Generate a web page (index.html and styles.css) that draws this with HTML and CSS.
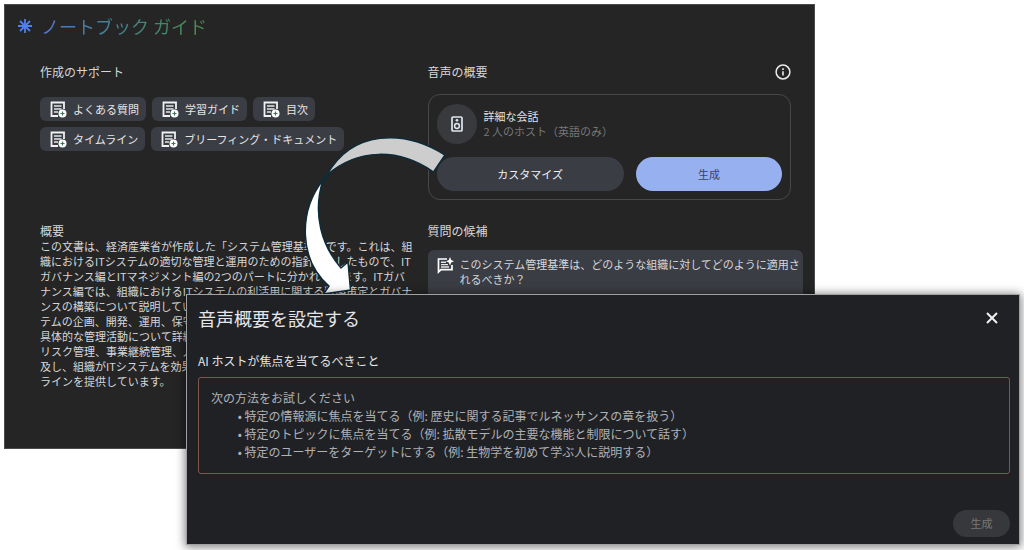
FILE: index.html
```html
<!DOCTYPE html>
<html lang="ja">
<head>
<meta charset="utf-8">
<title>ノートブック ガイド</title>
<link rel="stylesheet" href="styles.css">
</head>
<body>
<svg class="defs" aria-hidden="true">
  <symbol id="doc-add" viewBox="0 0 17 17">
    <path d="M8 15H1.500V1.500H14V8" fill="none" stroke="#f1f1f1" stroke-width="1.800"/>
    <path d="M4 5h7.500M4 8h7.500M4 11h4" stroke="#e4e5e8" stroke-width="1.500"/>
    <circle cx="12.500" cy="12.500" r="4" fill="#fff"/>
    <path d="M12.500 10.500v4M10.500 12.500h4" stroke="#43705a" stroke-width="1.200"/>
  </symbol>
</svg>

<main class="guide">
  <header class="guide-header">
    <svg class="spark" viewBox="0 0 16 16" aria-hidden="true">
      <path d="M8 1v14M1 8h14M3 3l10 10M13 3L3 13" stroke="#4f7ff0" stroke-width="1.800"/>
    </svg>
    <h1 class="guide-title">ノートブック ガイド</h1>
  </header>

  <div class="grid">
    <section>
      <h2 class="section-title">作成のサポート</h2>
      <div class="chips">
        <button class="chip"><svg class="chip-icon"><use href="#doc-add"/></svg>よくある質問</button>
        <button class="chip"><svg class="chip-icon"><use href="#doc-add"/></svg>学習ガイド</button>
        <button class="chip"><svg class="chip-icon"><use href="#doc-add"/></svg>目次</button>
        <button class="chip"><svg class="chip-icon"><use href="#doc-add"/></svg>タイムライン</button>
        <button class="chip"><svg class="chip-icon"><use href="#doc-add"/></svg>ブリーフィング・ドキュメント</button>
      </div>
    </section>

    <section class="audio">
      <div class="audio-head">
        <h2 class="section-title">音声の概要</h2>
        <button class="icon-button" aria-label="情報">
          <svg class="info-icon" viewBox="0 0 16 16" aria-hidden="true">
            <circle cx="8" cy="8" r="6.900" fill="none" stroke="#e8eaee" stroke-width="1.500"/>
            <path d="M8 7.200v4.300M8 4.300v1.700" stroke="#e8eaee" stroke-width="1.600"/>
          </svg>
        </button>
      </div>
      <div class="audio-card">
        <div class="host">
          <span class="host-badge">
            <svg class="speaker" viewBox="0 0 12 16" aria-hidden="true">
              <rect x="1" y="1" width="10" height="14" rx="1" fill="none" stroke="#dfe6ef" stroke-width="1.700"/>
              <circle cx="6" cy="4.300" r="1.300" fill="#dfe6ef"/>
              <circle cx="6" cy="10" r="2.400" fill="none" stroke="#dfe6ef" stroke-width="1.500"/>
            </svg>
          </span>
          <div class="host-text">
            <p class="host-name">詳細な会話</p>
            <p class="host-note">2 人のホスト（英語のみ）</p>
          </div>
        </div>
        <div class="actions">
          <button class="pill pill-dark">カスタマイズ</button>
          <button class="pill pill-primary">生成</button>
        </div>
      </div>
    </section>

    <section>
      <h2 class="sub-title">概要</h2>
      <p class="summary">
        <span>この文書は、経済産業省が作成した「システム管理基準」です。これは、組</span>
        <span>織におけるITシステムの適切な管理と運用のための指針を示したもので、IT</span>
        <span>ガバナンス編とITマネジメント編の2つのパートに分かれています。ITガバ</span>
        <span>ナンス編では、組織におけるITシステムの利活用に関する戦略策定とガバナ</span>
        <span>ンスの構築について説明してい</span>
        <span>テムの企画、開発、運用、保守</span>
        <span>具体的な管理活動について詳細</span>
        <span>リスク管理、事業継続管理、人</span>
        <span>及し、組織がITシステムを効果</span>
        <span>ラインを提供しています。</span>
      </p>
    </section>

    <section class="questions">
      <h2 class="sub-title">質問の候補</h2>
      <button class="question">
        <svg class="question-icon" viewBox="0 0 17 17" aria-hidden="true">
          <path d="M10 2H1.500V15L4 12.700H15V8" fill="none" stroke="#fff" stroke-width="1.700"/>
          <path d="M4 5.200h5M4 7.600h7M4 10h8" stroke="#e4e5e8" stroke-width="1.400"/>
          <path d="M13 0l1.200 3 2.800 1.200-2.800 1.200L13 8.400l-1.200-3L9 4.200 11.800 3z" fill="#fff"/>
        </svg>
        <span>このシステム管理基準は、どのような組織に対してどのように適用されるべきか？</span>
      </button>
    </section>
  </div>
</main>

<svg class="arrow" viewBox="0 0 150 165" aria-hidden="true">
  <g stroke="#0c2c3a" stroke-width="1.500" stroke-linejoin="round">
    <path d="M27 45C52 0 104-1 145 25L133.500 42C99 18 58 18 27 45Z" fill="#cdcdcd"/>
    <path d="M23 50C-2 82-1 130 29 156L23.500 164L50.500 160L48 132L41 138C22 116 12 84 23 50Z" fill="#fff"/>
    <path d="M28 44L22 53" stroke-width="3"/>
  </g>
</svg>

<div class="dialog" role="dialog" aria-labelledby="dialog-title">
  <div class="dialog-head">
    <h2 class="dialog-title" id="dialog-title">音声概要を設定する</h2>
    <button class="icon-button close" aria-label="閉じる">
      <svg class="close-icon" viewBox="0 0 12 12" aria-hidden="true">
        <path d="M1 1l10 10M11 1L1 11" stroke="#f0f0f0" stroke-width="2"/>
      </svg>
    </button>
  </div>
  <label class="field-label" for="focus">AI ホストが焦点を当てるべきこと</label>
  <textarea class="field" id="focus" placeholder="次の方法をお試しください
　　 • 特定の情報源に焦点を当てる（例: 歴史に関する記事でルネッサンスの章を扱う）
　　 • 特定のトピックに焦点を当てる（例: 拡散モデルの主要な機能と制限について話す）
　　 • 特定のユーザーをターゲットにする（例: 生物学を初めて学ぶ人に説明する）"></textarea>
  <div class="dialog-foot">
    <button class="generate" disabled>生成</button>
  </div>
</div>
</body>
</html>
```
FILE: styles.css
```css
* {
  box-sizing: border-box;
}

body {
  position: relative;
  min-height: 100vh;
  margin: 0;
  padding: 4px;
  background: #fff;
  color: #d6d7da;
  font: 11px/15px "Noto Sans CJK JP", sans-serif;
}

h1, h2, p {
  margin: 0;
  font-weight: 400;
}

button {
  margin: 0;
  border: 0;
  color: inherit;
  font: inherit;
}

svg {
  display: block;
  flex: none;
}

.defs {
  position: absolute;
  width: 0;
  height: 0;
}

.guide {
  margin-right: 205px;
  padding: 10px 11px 59px 12px;
  border: 1px solid #4a4a4a;
  background: #252525;
}

.guide-header {
  display: flex;
  align-items: center;
  gap: 8px;
  margin-bottom: 25px;
}

.spark {
  width: 16px;
  height: 16px;
}

.guide-title {
  background: linear-gradient(90deg, #5578d0, #43827f 55%, #4b8f4c);
  background-clip: text;
  color: transparent;
  font-size: 18px;
  font-weight: 400;
  line-height: 22px;
}

.grid {
  display: grid;
  grid-template-columns: minmax(0, 1fr) minmax(0, 1fr);
  gap: 23px 12px;
  margin-left: 23px;
}

.section-title {
  font-size: 12px;
  line-height: 20px;
}

.sub-title {
  font-size: 12px;
  line-height: 16px;
}

.chips {
  display: flex;
  flex-wrap: wrap;
  gap: 6px;
  margin-top: 15px;
}

.chip {
  display: flex;
  align-items: center;
  gap: 6px;
  height: 24px;
  padding: 0 7px 0 10px;
  border-radius: 6px;
  background: #3b3d44;
  color: #e6e6e8;
}

.chip-icon {
  width: 17px;
  height: 17px;
}

.audio {
  margin-right: 12px;
}

.audio-head {
  display: flex;
  align-items: center;
  justify-content: space-between;
}

.icon-button {
  padding: 0;
  background: none;
}

.info-icon {
  width: 16px;
  height: 16px;
}

.audio-card {
  margin-top: 12px;
  padding: 9px 8px 8px;
  border: 1px solid #47484a;
  border-radius: 12px;
}

.host {
  display: flex;
  align-items: center;
  gap: 7px;
}

.host-badge {
  display: grid;
  place-items: center;
  width: 40px;
  height: 40px;
  border-radius: 50%;
  background: #393a3e;
}

.speaker {
  width: 12px;
  height: 16px;
}

.host-name {
  color: #e0e0e2;
}

.host-note {
  color: #77787a;
}

.actions {
  display: flex;
  gap: 12px;
  margin-top: 13px;
}

.pill {
  height: 34px;
  padding: 0;
  border-radius: 17px;
}

.pill-dark {
  flex: 187 1 0;
  background: #3b3d44;
  color: #f0f0f2;
}

.pill-primary {
  flex: 146 1 0;
  background: #97b0f0;
  color: #39445e;
}

.summary span {
  display: block;
  white-space: nowrap;
}

.question {
  display: flex;
  align-items: flex-start;
  gap: 6px;
  width: 100%;
  height: 60px;
  margin-top: 11px;
  padding: 7px 0 0 9px;
  border-radius: 6px;
  background: #3b3d44;
  text-align: left;
}

.question-icon {
  width: 17px;
  height: 17px;
}

.arrow {
  position: absolute;
  top: 130px;
  left: 300px;
  width: 150px;
  height: 165px;
}

.dialog {
  position: absolute;
  top: 294px;
  right: 4px;
  left: 186px;
  padding: 9px 9px 7px 11px;
  border: 1px solid #a0a2a2;
  background: #202124;
  box-shadow: 0 1px 9px 1px rgba(0, 0, 0, 0.5);
}

.dialog-head {
  display: flex;
  align-items: center;
  justify-content: space-between;
}

.dialog-title {
  color: #e6e6e8;
  font-size: 18px;
  line-height: 28px;
}

.close {
  margin-right: 12px;
}

.close-icon {
  width: 12px;
  height: 12px;
}

.field-label {
  display: block;
  margin: 19px 0 6px;
  color: #e6e6e8;
  font-size: 12px;
  line-height: 20px;
}

.field {
  display: block;
  width: 100%;
  height: 97px;
  padding: 11px 12px;
  border: 1px solid #80574f;
  border-radius: 3px;
  background: transparent;
  color: #e6e6e8;
  font: inherit;
  font-size: 12px;
  line-height: 18px;
  resize: none;
}

.field::placeholder {
  color: #b0b1b4;
  opacity: 1;
}

.dialog-foot {
  display: flex;
  justify-content: flex-end;
  margin-top: 36px;
}

.generate {
  width: 57px;
  height: 27px;
  padding: 0;
  border-radius: 14px;
  background: #37383b;
  color: #77787b;
}
```
